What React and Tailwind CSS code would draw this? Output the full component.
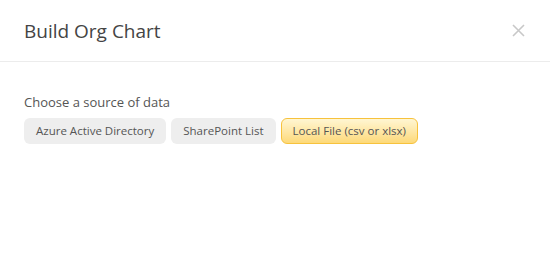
export default function App() {
  const sources = ['Azure Active Directory', 'SharePoint List'];
  return (
    <div className="w-[550px] h-[266px] bg-white" style={{ fontFamily: '"Open Sans", sans-serif' }}>
      <div className="h-[62px] flex items-center justify-between px-6 border-b border-[#ececec]">
        <h1 className="text-[19px] text-[#444] font-normal leading-none pt-[2px]">Build Org Chart</h1>
        <button className="w-[13px] h-[13px] mr-[1px] text-[#c8c8c8]">
          <svg viewBox="0 0 13 13" className="w-[13px] h-[13px]" fill="none" stroke="currentColor" strokeWidth="1.6">
            <path d="M1 1l11 11M12 1L1 12" />
          </svg>
        </button>
      </div>
      <div className="px-6 pt-[34px]">
        <div className="text-[13px] text-[#555] leading-none mb-[9px]">Choose a source of data</div>
        <div className="flex gap-[5px]">
          {sources.map(s => (
            <button key={s} className="h-[26px] px-[12px] rounded-[6px] bg-[#eeeeee] text-[11.5px] text-[#555]">
              {s}
            </button>
          ))}
          <button className="h-[26px] px-[11px] rounded-[6px] border border-[#f7c23c] bg-gradient-to-b from-[#fff6d2] to-[#fdd978] text-[11.5px] text-[#555]">
            Local File (csv or xlsx)
          </button>
        </div>
      </div>
    </div>
  );
}
